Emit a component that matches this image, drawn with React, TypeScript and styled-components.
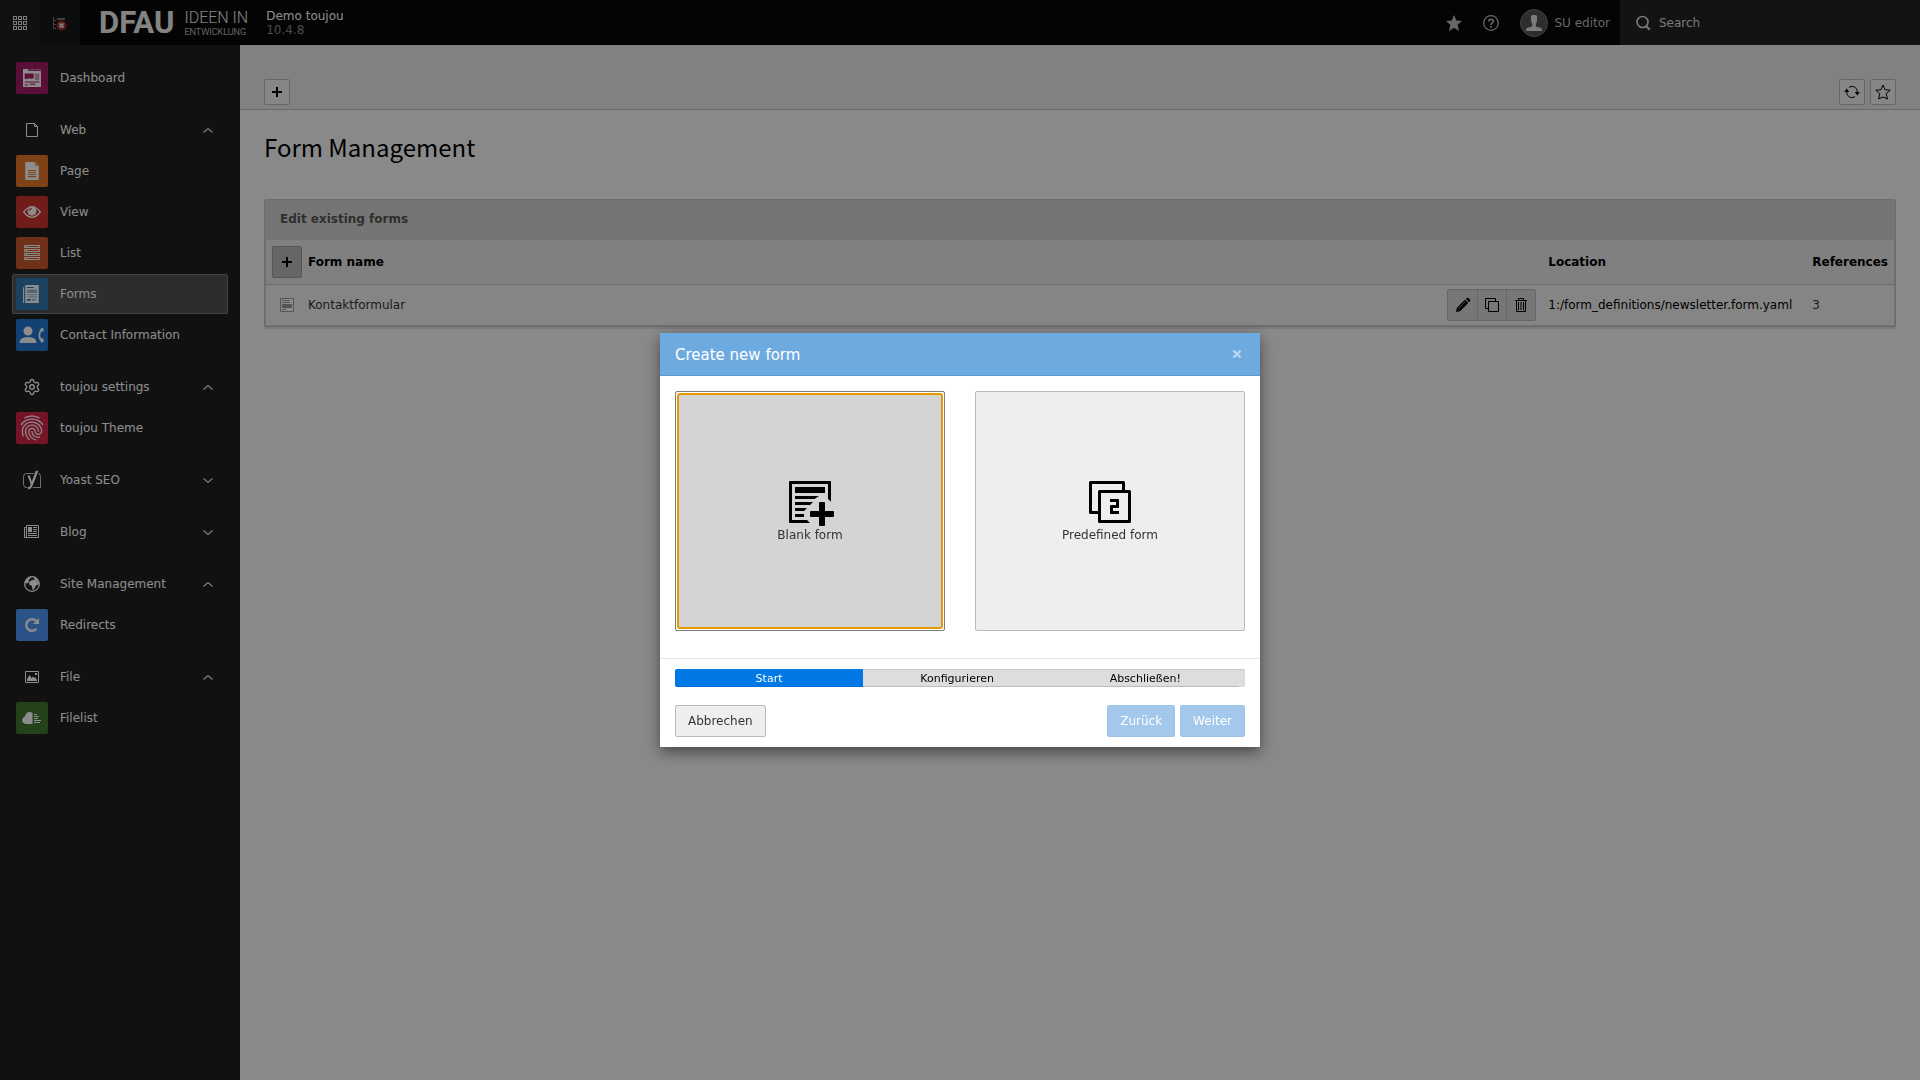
import React from 'react';
import styled, { createGlobalStyle, css } from 'styled-components';
import { FaYoast } from 'react-icons/fa';
import { MdFingerprint } from 'react-icons/md';
import { Settings } from 'lucide-react';

const GlobalStyle = createGlobalStyle`
  *, *::before, *::after { box-sizing: border-box; }
  html, body, #root { height: 100%; }
  body {
    margin: 0;
    background: #fafafa;
    color: #333;
    font: 12px/18px Verdana, "DejaVu Sans", sans-serif;
  }
  button, input { font: inherit; color: inherit; margin: 0; }
  button { cursor: pointer; padding: 0; }
  svg { display: block; flex: none; }
`;

/* ---------- shell ---------- */

const Shell = styled.div`
  min-height: 100%;
  display: grid;
  grid-template-columns: 240px minmax(0, 1fr);
  grid-template-rows: 45px 1fr;
`;

const Topbar = styled.header`
  grid-column: 1 / -1;
  display: flex;
  background: #090909;
  color: #bbb;
`;

const TopbarToggle = styled.button<{ $tone: string }>`
  width: 40px;
  border: 0;
  background: ${(p) => p.$tone};
  display: flex;
  align-items: center;
  justify-content: center;
`;

const Brand = styled.a`
  display: flex;
  align-items: center;
  gap: 10px;
  padding-left: 19px;
  color: #f0f0f0;
  text-decoration: none;
  font-family: Roboto, sans-serif;
`;

const BrandName = styled.span`
  font-size: 31px;
  line-height: 45px;
  font-weight: 700;
`;

const BrandClaim = styled.span`
  display: flex;
  flex-direction: column;
  font-size: 9px;
  line-height: 10px;
  font-weight: 300;
`;

const BrandClaimTop = styled.span`
  font-size: 16px;
  line-height: 18px;
`;

const Site = styled.div`
  display: flex;
  flex-direction: column;
  justify-content: center;
  padding-left: 18px;
  color: #fff;
  line-height: 14px;
`;

const Version = styled.span`
  color: #8a8a8a;
`;

const Tools = styled.div`
  display: flex;
  align-items: center;
  gap: 1px;
  margin-left: auto;
`;

const Tool = styled.button`
  display: flex;
  align-items: center;
  gap: 6px;
  height: 45px;
  padding: 0 10px;
  border: 0;
  background: transparent;
`;

const Avatar = styled.span`
  width: 28px;
  height: 28px;
  border: 1px solid #777;
  border-radius: 50%;
  background: #555;
  display: flex;
  align-items: center;
  justify-content: center;
`;

const SearchBox = styled.label`
  width: 300px;
  display: flex;
  align-items: center;
  gap: 8px;
  padding: 0 15px;
  background: #242424;
  color: #ddd;
`;

const SearchInput = styled.input`
  flex: 1;
  min-width: 0;
  padding: 0;
  border: 0;
  outline: 0;
  background: transparent;
  &::placeholder { color: #ddd; opacity: 1; }
`;

/* ---------- module menu ---------- */

const Sidebar = styled.nav`
  background: #1f1f1f;
  color: #fff;
  padding: 13px 12px;
  display: flex;
  flex-direction: column;
  gap: 12px;
`;

const Group = styled.div`
  display: grid;
  gap: 1px;
`;

const itemBox = css`
  display: flex;
  align-items: center;
  gap: 12px;
  width: 100%;
  height: 40px;
  padding: 0 11px 0 3px;
  border: 1px solid transparent;
  border-radius: 2px;
  text-align: left;
  text-decoration: none;
  color: inherit;
  background: transparent;
`;

const GroupToggle = styled.button`
  ${itemBox}
`;

const ModuleLink = styled.a<{ $active?: boolean }>`
  ${itemBox}
  ${(p) => p.$active && css`
    background: #525252;
    border-color: #7c7c7c;
  `}
`;

const ModuleIcon = styled.span<{ $tone?: string }>`
  width: 32px;
  height: 32px;
  border-radius: 2px;
  background: ${(p) => p.$tone ?? 'transparent'};
  display: flex;
  align-items: center;
  justify-content: center;
`;

const Label = styled.span`
  flex: 1;
`;

/* ---------- content ---------- */

const Content = styled.div`
  min-width: 0;
`;

const DocHeader = styled.div`
  display: flex;
  align-items: flex-end;
  gap: 5px;
  height: 65px;
  padding: 0 24px 4px;
  border-bottom: 1px solid #bfbfbf;
  background: #ebebeb;
`;

const Spacer = styled.span`
  flex: 1;
`;

const iconButton = css`
  display: flex;
  align-items: center;
  justify-content: center;
  border: 1px solid #bbb;
  border-radius: 2px;
  color: #000;
`;

const HeaderButton = styled.button`
  ${iconButton}
  width: 26px;
  height: 26px;
  background: #f5f5f5;
`;

const Main = styled.main`
  padding: 18px 24px 24px;
`;

const Title = styled.h1`
  margin: 0 0 33px;
  font: 400 24px/38px "Source Sans Pro", "Noto Sans CJK JP", sans-serif;
  color: #000;
`;

const Panel = styled.section`
  border: 1px solid #c3c3c3;
  border-radius: 2px;
  background: #d6d6d6;
  box-shadow: 0 2px 0 #dedede;
`;

const PanelTitle = styled.h2`
  margin: 0;
  padding: 10px 15px 11px;
  font-size: 12px;
  line-height: 18px;
  font-weight: 700;
  color: #555;
`;

const Table = styled.table`
  width: 100%;
  border-collapse: separate;
  border-spacing: 0;
  border: 1px solid #cecece;
  text-align: left;
  color: #000;
  thead { background: #e9e9e9; }
  tbody { background: #f3f3f3; }
  th { border-bottom: 1px solid #c3c3c3; font-weight: 700; }
`;

const Cell = styled.td<{ $grow?: boolean; $icon?: boolean; $min?: number }>`
  padding: ${(p) => (p.$icon ? '6px 0 6px 6px' : '4px 6px')};
  width: ${(p) => (p.$grow ? '100%' : p.$icon ? '36px' : 'auto')};
  min-width: ${(p) => (p.$min ? `${p.$min}px` : '0')};
  white-space: nowrap;
`;

const RecordIcon = styled.span`
  display: flex;
  justify-content: center;
  width: 30px;
`;

const RecordLink = styled.a`
  color: #333;
  text-decoration: none;
`;

const AddButton = styled.button`
  ${iconButton}
  width: 30px;
  height: 32px;
  background: #bbb;
  border-color: #9c9c9c;
`;

const ButtonGroup = styled.div`
  display: flex;
  border: 1px solid #bbb;
  border-radius: 2px;
  background: #d9d9d9;
`;

const GroupButton = styled.button`
  width: 29px;
  height: 30px;
  border: 0;
  background: transparent;
  color: #000;
  display: flex;
  align-items: center;
  justify-content: center;
  & + & { border-left: 1px solid #bbb; }
`;

/* ---------- wizard ---------- */

const Backdrop = styled.div`
  position: fixed;
  inset: 0;
  display: flex;
  align-items: center;
  justify-content: center;
  background: rgba(0, 0, 0, 0.45);
`;

const Modal = styled.div`
  width: 600px;
  max-width: 100%;
  background: #fff;
  border-radius: 1px;
  overflow: hidden;
  box-shadow: 0 5px 15px rgba(0, 0, 0, 0.5);
`;

const ModalHeader = styled.header`
  display: flex;
  align-items: center;
  justify-content: space-between;
  padding: 10px 15px;
  border-bottom: 1px solid #589ad8;
  background: #6daae0;
  color: #fff;
`;

const ModalTitle = styled.h2`
  margin: 0;
  padding-top: 2px;
  font-size: 15px;
  line-height: 20px;
  font-weight: 400;
`;

const CloseButton = styled.button`
  width: 16px;
  height: 16px;
  border: 0;
  background: transparent;
  color: #b9d7f2;
  display: flex;
  align-items: center;
  justify-content: center;
`;

const ModalBody = styled.div`
  display: grid;
  grid-template-columns: 1fr 1fr;
  gap: 30px;
  padding: 15px 15px 27px;
`;

const Choice = styled.button<{ $focused?: boolean }>`
  position: relative;
  height: 240px;
  display: flex;
  flex-direction: column;
  align-items: center;
  justify-content: center;
  border: 1px solid #bbb;
  border-radius: 2px;
  background: #eee;
  color: #333;
  svg { color: #000; }
  ${(p) => p.$focused && css`
    border-color: #7e7e7e;
    background: #d4d4d4;
    box-shadow: inset 0 0 0 2px #fff;
    outline: 0;
    &::after {
      content: "";
      position: absolute;
      inset: 1px;
      border: 2px solid #e69a00;
      border-radius: 3px;
    }
  `}
`;

const ModalFooter = styled.footer`
  padding: 10px 15px;
  border-top: 1px solid #e5e5e5;
`;

const Progress = styled.ol`
  display: flex;
  height: 18px;
  margin: 0 0 18px;
  padding: 0;
  list-style: none;
  overflow: hidden;
  border-radius: 2px;
  background: #ddd;
  box-shadow: inset 0 1px 1px #c8c8c8;
`;

const Step = styled.li<{ $current?: boolean }>`
  width: 33%;
  font-size: 11px;
  line-height: 20px;
  text-align: center;
  color: ${(p) => (p.$current ? '#fff' : '#000')};
  background: ${(p) => (p.$current ? '#0078e6' : 'transparent')};
  height: 18px;
  box-shadow: inset 0 -1px 0 ${(p) => (p.$current ? '#006fd5' : '#bcbcbc')};
`;

const Actions = styled.div`
  display: flex;
  gap: 5px;
`;

const ActionButton = styled.button<{ $primary?: boolean }>`
  height: 32px;
  padding: 0 12px;
  border: 1px solid ${(p) => (p.$primary ? '#9ac4ea' : '#bbb')};
  border-radius: 2px;
  background: ${(p) => (p.$primary ? '#a4c8eb' : '#eee')};
  color: ${(p) => (p.$primary ? '#fff' : '#333')};
`;

/* ---------- icons ---------- */

type IconProps = { size?: number; children: React.ReactNode };
const Icon = ({ size = 16, children }: IconProps) => (
  <svg width={size} height={size} viewBox="0 0 16 16" fill="currentColor" aria-hidden="true">
    {children}
  </svg>
);

const Plus = () => <Icon><path d="M7 3h2v4h4v2H9v4H7V9H3V7h4z" /></Icon>;
const Grid = () => (
  <Icon>
    <g fill="none" stroke="#e4e4e4">
      {[1.5, 6.5, 11.5].map((y) => [1.5, 6.5, 11.5].map((x) => (
        <rect key={`${x}-${y}`} x={x} y={y} width="3" height="3" />
      )))}
    </g>
  </Icon>
);
const TreeOff = () => (
  <Icon>
    <path fill="#777" d="M1 2h1v11h2v1H1zM2 5h2v1H2zM2 9h2v1H2zM5 3h8v2H5z" />
    <circle cx="9.500" cy="10.500" r="5" fill="#a52a2a" />
    <path stroke="#ddd" strokeWidth="2" d="m7.500 8.500 4 4m0-4-4 4" />
  </Icon>
);
const StarFull = () => <Icon><path d="m8 0 2.300 5.400 5.700.500-4.300 3.900L13 16l-5-3.200L3 16l1.300-6.200L0 5.900l5.700-.500z" /></Icon>;
const StarLine = () => (
  <Icon>
    <path fill="none" stroke="currentColor" d="m8 1 2 4.800 5.200.400-4 3.500 1.300 5.300L8 12.900 3.500 15l1.300-5.300-4-3.500L6 5.800z" />
  </Icon>
);
const Help = () => (
  <Icon>
    <circle cx="8" cy="8" r="7.300" fill="none" stroke="currentColor" strokeWidth="1.300" />
    <path fill="none" stroke="currentColor" strokeWidth="1.700" d="M5.800 6.500C5.800 3.500 10.400 3.700 10.300 6.300 10.200 7.900 8 7.900 8 10" />
    <path d="M7.200 11h1.700v1.700H7.200z" />
  </Icon>
);
const Person = () => <Icon><path fill="#e0e0e0" d="M5 0.800Q8-1 11 .800V6L9.800 9v2.500L15 13q1 .500 1 3H0q0-2.500 1-3l5.200-1.500V9L5 6z" /></Icon>;
const Loupe = () => (
  <Icon>
    <circle cx="7.500" cy="7" r="5.500" fill="none" stroke="currentColor" strokeWidth="1.600" />
    <path stroke="currentColor" strokeWidth="2" d="m11 11 3.700 3.700" />
  </Icon>
);
const Refresh = () => (
  <Icon>
    <path fill="none" stroke="currentColor" d="M5 3.300A5.400 5.400 0 0 1 13.400 8M11 12.700A5.400 5.400 0 0 1 2.600 8" />
    <path d="M10.800 8h5l-2.500 3.500zM.200 8h5L2.700 4.500z" />
  </Icon>
);
const Chevron = ({ open }: { open: boolean }) => (
  <Icon>
    <path fill="none" stroke="#e0e0e0" strokeWidth="1.200" d={open ? 'm3.500 10.500 4.500-4 4.500 4' : 'm3.500 6.500 4.500 4 4.500-4'} />
  </Icon>
);
const Pencil = () => <Icon><path d="m1 15 .800-4L10 2.800 13.200 6 5 14.200zM10.800 2l1-1q.800-.600 1.600 0L15 2.600q.600.800 0 1.600l-1 1z" /><path stroke="#d9d9d9" strokeWidth=".600" d="m3.500 11.500 6.500-6.500" /></Icon>;
const Copy = () => <Icon><path fill="none" stroke="currentColor" d="M4.500 11.500h-3v-10h10v3M4.500 4.500h10v10h-10z" /></Icon>;
const Trash = () => (
  <Icon>
    <path fill="none" stroke="currentColor" d="M2 3.500h12M5.500 3V1.500h5V3M3.500 4v10.500h9V4" />
    <path d="M5 5h1v8H5zM7.500 5h1v8h-1zM10 5h1v8h-1z" />
  </Icon>
);
const FormRecord = () => (
  <Icon>
    <path fill="#fff" stroke="#999" d="M1.500 1.500h13v13h-13z" />
    <path fill="#999" d="M3 3h8v1H3zM3 5h8v1H3zM3 7h10v4H3z" />
    <path fill="#69c" d="M3 12h4v1H3z" />
  </Icon>
);
const Close = () => <Icon><path fill="none" stroke="currentColor" strokeWidth="2.400" d="m4.500 4.500 7 7m0-7-7 7" /></Icon>;
const BlankForm = () => (
  <Icon size={48}>
    <path d="M1.300 1h13.400q.300 0 .300.300v6.600L14 7V2H2v12h5l1 1H1.300q-.300 0-.300-.300V1.300q0-.300.300-.300z" />
    <path d="M3 3h10v2H3zM3 6h8l-1.500 1H3zM3 8h6L8 9H3zM3 10h4l-1 1H3zM3 12h3v1H3z" />
    <path d="M11.300 8h1.400q.300 0 .300.300V11h2.700q.300 0 .300.300v1.400q0 .300-.300.300H13v2.700q0 .300-.300.300h-1.400q-.300 0-.300-.300V13H8.300q-.300 0-.300-.300v-1.400q0-.300.300-.300H11V8.300q0-.300.300-.300z" />
  </Icon>
);
const PredefinedForm = () => (
  <Icon size={48}>
    <path fill="none" stroke="currentColor" strokeLinejoin="round" d="M4 11.500H1.500v-10h11V4M4.500 4.500h10v10h-10z" />
    <path d="M8 7h2.700q.300 0 .300.300V10H9v1h2v1H8.300q-.300 0-.300-.300V9.300q0-.300.300-.300H10V8H8z" />
  </Icon>
);

const WebIcon = () => <Icon><path fill="none" stroke="currentColor" d="M2.500 1.500h8l3 3v10h-11zM10.500 1.500v3h3" /></Icon>;
const BlogIcon = () => (
  <Icon>
    <path fill="none" stroke="currentColor" d="M2.500 1.500h12v12H.500v-10h2M2.500 1.500v12" />
    <path d="M4 3h4v5H4zM9 3h4v1H9zM9 5h4v1H9zM9 7h4v1H9zM4 9h9v1H4zM4 11h9v1H4z" />
  </Icon>
);
const GlobeIcon = () => (
  <Icon>
    <circle cx="8" cy="8" r="7.300" fill="none" stroke="currentColor" strokeWidth="1.300" />
    <path d="M3 2.500 7.500.800 6 3 4 4.500 5.500 5 3.500 7.500.800 7zM7 4.500l3-1 1.500 1 3.500 2-.500 2-2.500 1-2 4-1.500.500-.500-4-2.500-1-.500-2.500zM9 1l4 1.500 1.500 3-3-1z" />
  </Icon>
);
const FileIcon = () => (
  <Icon>
    <path fill="none" stroke="currentColor" d="M1.500 2.500h13v11h-13z" />
    <path d="M3 12V10l2.500-4 2 3L9 7.500l1 1.500 1-1 2 3v1zM11 4h2v2h-2z" />
  </Icon>
);
const DashboardIcon = () => (
  <Icon size={18}>
    <path d="M0 0h5v1.500h11V16H0z" />
    <path fill="#a31d67" d="M5 0h11v1.800H5zM1.500 4h8v4q-1.500 1-3 .500T1.500 9zM1.500 11h13v1h-13z" />
    <path d="M6 .200h4v1H6zM11 .200h5v1h-5z" opacity=".6" />
    <path fill="#a31d67" opacity=".45" d="M10.500 4h4v6h-4zM1.500 13h3v2h-3z" />
    <path fill="#a31d67" d="M6 13h5v1H6z" />
  </Icon>
);
const PageIcon = () => (
  <Icon size={18}>
    <path d="M2 0h8.500L14 3.500V16H2z" />
    <path fill="#e8792a" opacity=".6" d="M10.500 0 14 3.500h-3.500z" />
    <path stroke="#e8792a" strokeWidth=".900" d="M4.500 7.500h7M4.500 9.300h7M4.500 11.200h7M4.500 13h7" />
  </Icon>
);
const ViewIcon = () => (
  <Icon size={18}>
    <path fill="none" stroke="currentColor" strokeWidth="1.100" d="M.600 8Q8-1.500 15.400 8 8 17.500.600 8z" />
    <circle cx="8" cy="7.200" r="4" />
    <path fill="none" stroke="#cc352f" d="M5.700 7Q5.800 5 7.800 4.900" />
  </Icon>
);
const ListIcon = () => (
  <Icon>
    <g fill="none" stroke="currentColor">
      <path d="M.500.500h15v2H.500zM.500 4.500h15v2H.500zM.500 8.500h15v2H.500zM.500 12.500h15v2H.500zM2.500.500v2M2.500 4.500v2M2.500 8.500v2M2.500 12.500v2" />
    </g>
  </Icon>
);
const FormsIcon = () => (
  <Icon size={18}>
    <path d="M0 2h1v14H0zM2 0h12v16H2z" />
    <path fill="#317ab4" d="M3.500 1.700h6v1h-6zM3.500 12.500H7V14H3.500z" />
    <path fill="#317ab4" opacity=".5" d="M3.500 4h9v3h-9zM3.500 8h1v1h-1zM5 8h7.500v1H5zM3.500 10h1v1h-1zM5 10h7.500v1H5zM8 12.500h3.500V14H8z" />
  </Icon>
);
const ContactIcon = () => (
  <svg width="26" height="18" viewBox="0 0 26 18" fill="currentColor" aria-hidden="true">
    <circle cx="9" cy="5" r="4.500" />
    <path d="M.500 17q0-6 8.500-6t8.500 6z" />
    <path d="M22.500 1.500 25 3l-1 3-2-.500q-1.500 3.500 0 7l2-.500 1.200 3L22.500 17q-6-7 0-15.500z" />
  </svg>
);
const RedirectIcon = () => (
  <Icon>
    <path fill="none" stroke="currentColor" strokeWidth="2.400" d="M12.500 11.800A5.800 5.800 0 1 1 12.300 4" />
    <path d="M15 1v6H9z" />
  </Icon>
);
const FilelistIcon = () => (
  <svg width="20" height="14" viewBox="0 0 20 14" fill="currentColor" aria-hidden="true">
    <path d="M10.500 1v12H4Q0 12.500.200 8.700.500 6.300 3 5.500 4 1 7.500 1q2 0 3 1z" />
    <path d="M12 3h3v1h-3zM12 5h5v1h-5zM12 7h4v1h-4zM12 9h7v1h-7zM12 11h6v1h-6z" />
  </svg>
);

/* ---------- data ---------- */

type Module = { label: string; icon: React.ReactNode; tone: string; active?: boolean };
type ModuleGroup = { label?: string; icon?: React.ReactNode; open?: boolean; items: Module[] };

const menu: ModuleGroup[] = [
  { items: [{ label: 'Dashboard', icon: <DashboardIcon />, tone: '#a31d67' }] },
  {
    label: 'Web', icon: <WebIcon />, open: true,
    items: [
      { label: 'Page', icon: <PageIcon />, tone: '#e8792a' },
      { label: 'View', icon: <ViewIcon />, tone: '#cc352f' },
      { label: 'List', icon: <ListIcon />, tone: '#cb5c2e' },
      { label: 'Forms', icon: <FormsIcon />, tone: '#317ab4', active: true },
      { label: 'Contact Information', icon: <ContactIcon />, tone: '#2177d2' },
    ],
  },
  {
    label: 'toujou settings', icon: <Settings size={18} strokeWidth={1.8} />, open: true,
    items: [{ label: 'toujou Theme', icon: <MdFingerprint size={30} />, tone: '#d62448' }],
  },
  { label: 'Yoast SEO', icon: <FaYoast size={20} />, open: false, items: [] },
  { label: 'Blog', icon: <BlogIcon />, open: false, items: [] },
  {
    label: 'Site Management', icon: <GlobeIcon />, open: true,
    items: [{ label: 'Redirects', icon: <RedirectIcon />, tone: '#5098f8' }],
  },
  {
    label: 'File', icon: <FileIcon />, open: true,
    items: [{ label: 'Filelist', icon: <FilelistIcon />, tone: '#437731' }],
  },
];

const forms = [
  { name: 'Kontaktformular', location: '1:/form_definitions/newsletter.form.yaml', references: 3 },
];

const steps = ['Start', 'Konfigurieren', 'Abschließen!'];

export default function App() {
  return (
    <>
      <GlobalStyle />
      <Shell>
        <Topbar>
          <TopbarToggle $tone="#1f1f1f" aria-label="Toggle module menu"><Grid /></TopbarToggle>
          <TopbarToggle $tone="#181818" aria-label="Toggle page tree"><TreeOff /></TopbarToggle>
          <Brand href="#">
            <BrandName>DFAU</BrandName>
            <BrandClaim>
              <BrandClaimTop>IDEEN IN</BrandClaimTop>
              ENTWICKLUNG
            </BrandClaim>
          </Brand>
          <Site>
            <span>Demo toujou</span>
            <Version>10.4.8</Version>
          </Site>
          <Tools>
            <Tool aria-label="Bookmarks"><StarFull /></Tool>
            <Tool aria-label="Help"><Help /></Tool>
            <Tool>
              <Avatar><Person /></Avatar>
              SU editor
            </Tool>
          </Tools>
          <SearchBox>
            <Loupe />
            <SearchInput type="text" placeholder="Search" aria-label="Search" />
          </SearchBox>
        </Topbar>

        <Sidebar aria-label="Modules">
          {menu.map((group, i) => (
            <Group key={i}>
              {group.label && (
                <GroupToggle aria-expanded={group.open}>
                  <ModuleIcon>{group.icon}</ModuleIcon>
                  <Label>{group.label}</Label>
                  <Chevron open={!!group.open} />
                </GroupToggle>
              )}
              {group.items.map((m) => (
                <ModuleLink key={m.label} href="#" $active={m.active}>
                  <ModuleIcon $tone={m.tone}>{m.icon}</ModuleIcon>
                  <Label>{m.label}</Label>
                </ModuleLink>
              ))}
            </Group>
          ))}
        </Sidebar>

        <Content>
          <DocHeader>
            <HeaderButton aria-label="New form"><Plus /></HeaderButton>
            <Spacer />
            <HeaderButton aria-label="Reload"><Refresh /></HeaderButton>
            <HeaderButton aria-label="Bookmark"><StarLine /></HeaderButton>
          </DocHeader>
          <Main>
            <Title>Form Management</Title>
            <Panel>
              <PanelTitle>Edit existing forms</PanelTitle>
              <Table>
                <thead>
                  <tr>
                    <Cell as="th" $icon>
                      <AddButton aria-label="Create new form"><Plus /></AddButton>
                    </Cell>
                    <Cell as="th" $grow colSpan={2}>Form name</Cell>
                    <Cell as="th" $min={264}>Location</Cell>
                    <Cell as="th">References</Cell>
                  </tr>
                </thead>
                <tbody>
                  {forms.map((f) => (
                    <tr key={f.name}>
                      <Cell $icon><RecordIcon><FormRecord /></RecordIcon></Cell>
                      <Cell $grow><RecordLink href="#">{f.name}</RecordLink></Cell>
                      <Cell>
                        <ButtonGroup>
                          <GroupButton aria-label="Edit"><Pencil /></GroupButton>
                          <GroupButton aria-label="Duplicate"><Copy /></GroupButton>
                          <GroupButton aria-label="Delete"><Trash /></GroupButton>
                        </ButtonGroup>
                      </Cell>
                      <Cell>{f.location}</Cell>
                      <Cell><RecordLink href="#">{f.references}</RecordLink></Cell>
                    </tr>
                  ))}
                </tbody>
              </Table>
            </Panel>
          </Main>
        </Content>
      </Shell>

      <Backdrop>
        <Modal role="dialog" aria-modal="true" aria-labelledby="wizard-title">
          <ModalHeader>
            <ModalTitle id="wizard-title">Create new form</ModalTitle>
            <CloseButton aria-label="Close"><Close /></CloseButton>
          </ModalHeader>
          <ModalBody>
            <Choice $focused><BlankForm />Blank form</Choice>
            <Choice><PredefinedForm />Predefined form</Choice>
          </ModalBody>
          <ModalFooter>
            <Progress>
              {steps.map((s, i) => <Step key={s} $current={i === 0}>{s}</Step>)}
            </Progress>
            <Actions>
              <ActionButton>Abbrechen</ActionButton>
              <Spacer />
              <ActionButton $primary>Zurück</ActionButton>
              <ActionButton $primary>Weiter</ActionButton>
            </Actions>
          </ModalFooter>
        </Modal>
      </Backdrop>
    </>
  );
}
